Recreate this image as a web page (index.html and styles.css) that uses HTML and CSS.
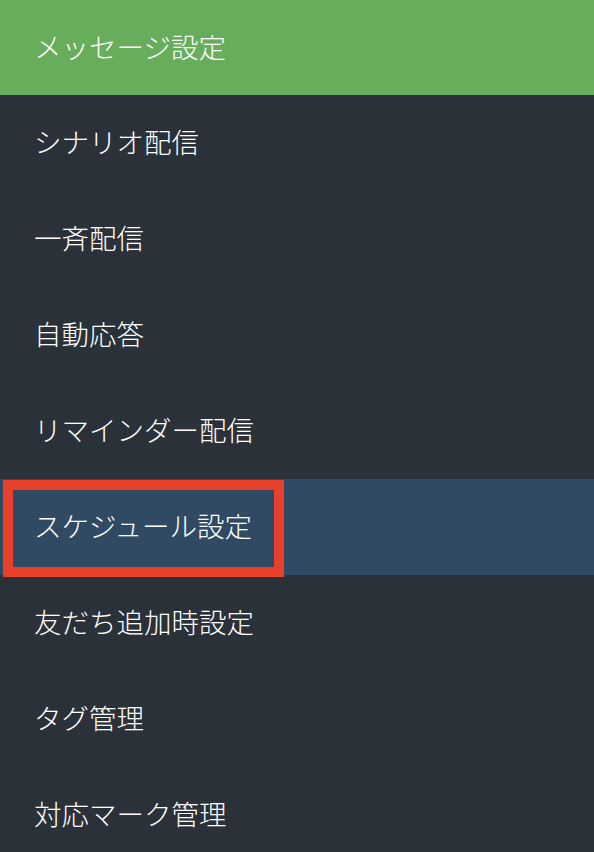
FILE: index.html
```html
<!DOCTYPE html>
<html lang="ja">
<head>
  <meta charset="UTF-8" />
  <meta name="viewport" content="width=device-width, initial-scale=1.0"/>
  <title>メッセージ設定</title>
  <link rel="stylesheet" href="styles.css">
</head>
<body>
  <div class="menu">
    <div class="menu-head">メッセージ設定</div>
    <ul class="menu-list">
      <li>シナリオ配信</li>
      <li>一斉配信</li>
      <li>自動応答</li>
      <li>リマインダー配信</li>
      <li class="active">スケジュール設定<span class="mark"></span></li>
      <li>友だち追加時設定</li>
      <li>タグ管理</li>
      <li>対応マーク管理</li>
    </ul>
  </div>
</body>
</html>
```

FILE: styles.css
```css
* { box-sizing: border-box; }
body {
  margin: 0;
  background: #2a3139;
  font-family: "Noto Sans CJK JP", "Noto Sans", sans-serif;
  font-weight: 300;
  color: #fff;
}
.menu {
  width: 594px;
  height: 852px;
  overflow: hidden;
  background: #2a3139;
}
.menu-head {
  height: 95px;
  background: #67ad5c;
  padding: 0 0 4px 34px;
  display: flex;
  align-items: center;
  font-size: 27.5px;
}
.menu-list {
  list-style: none;
  margin: 0;
  padding: 0;
}
.menu-list li {
  position: relative;
  height: 96px;
  padding: 0 0 4px 34px;
  display: flex;
  align-items: center;
  font-size: 27.5px;
}
.menu-list li.active {
  background: #304a63;
}
.mark {
  position: absolute;
  left: 3px;
  top: 1px;
  width: 281px;
  height: 97px;
  border: 10px solid #e9402a;
}
```
